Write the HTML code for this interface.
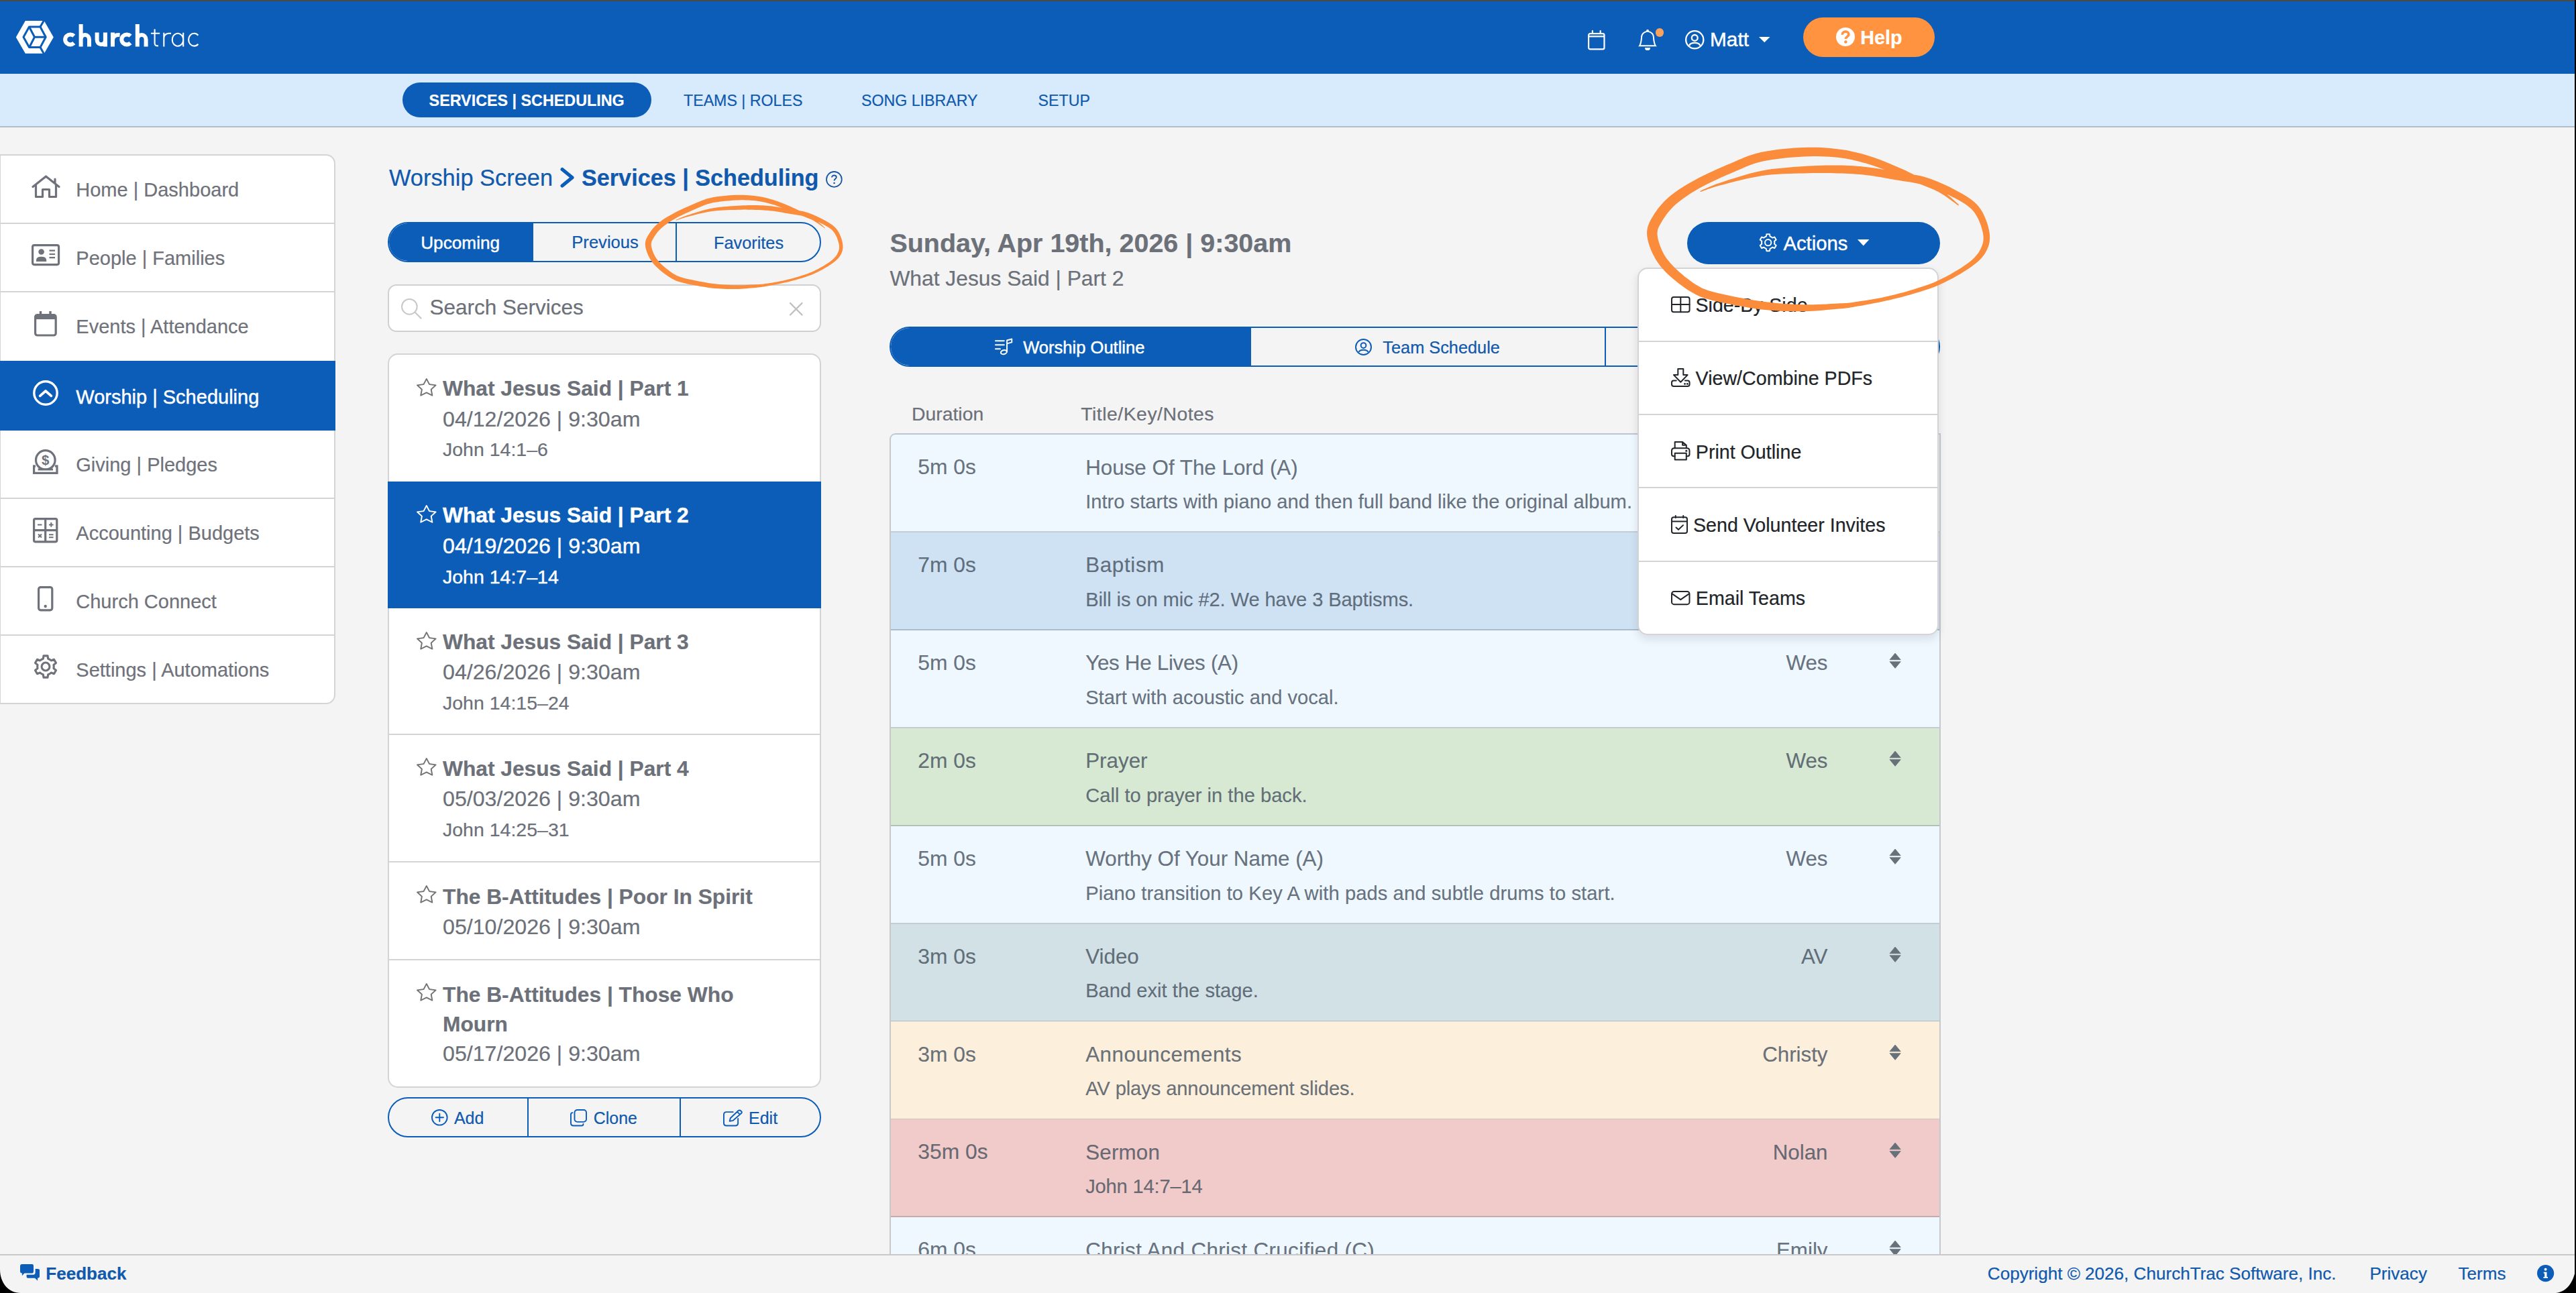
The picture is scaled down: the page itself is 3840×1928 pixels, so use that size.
<!DOCTYPE html>
<html>
<head>
<meta charset="utf-8">
<title>ChurchTrac - Services | Scheduling</title>
<style>
*{box-sizing:border-box;margin:0;padding:0}
html,body{width:3840px;height:1928px;overflow:hidden;background:#f4f4f4;font-family:"Liberation Sans",sans-serif}
body{position:relative;color:#6c7079}
.abs{position:absolute}
.t{position:absolute;white-space:nowrap;line-height:1;-webkit-text-stroke:.22px}
svg{position:absolute;overflow:visible}
</style>
</head>
<body>
<!-- HEADER -->
<div class="abs" style="left:0.0px;top:0.0px;width:3840.0px;height:110.0px;background:#0b5db7"></div>
<div class="abs" style="left:0.0px;top:0.0px;width:3840.0px;height:2.0px;background:#4b4947"></div>
<div class="abs" style="left:0.0px;top:110.0px;width:3840.0px;height:80.0px;background:#d8ebfd;border-bottom:2px solid #b1bdc9"></div>
<svg style="left:0.0px;top:0.0px;" width="110.0" height="110.0" viewBox="0 0 110 110"><polygon points="23.8,55.4 37.8,31 65.8,31 79.8,55.4 65.8,79.8 37.8,79.8" fill="#fff"/><polygon points="35,55.3 43.5,40 60,40 68.2,55.3 60,70.6 43.5,70.6" fill="#fff" stroke="#0b5db7" stroke-width="3" stroke-linejoin="round"/><path d="M44 41L51.5 55.3H68 M51.5 55.3L44 70" fill="none" stroke="#0b5db7" stroke-width="3"/><path d="M60 40L65.5 30.5M60 70.6L65.5 80.3" fill="none" stroke="#0b5db7" stroke-width="3"/></svg>
<svg style="left:0.0px;top:0.0px;" width="320.0" height="110.0" viewBox="0 0 320 110"><path d="M110.3 53.7A7.7 7.45 0 1 0 110.3 64.2M120.6 69.4V36.1M120.6 59A6.2 6.9 0 0 1 133 59V69.4M144.6 48.5V59.4A6.15 6.8 0 0 0 156.9 59.4M156.9 48.5V69.4M168 69.4V48.5M168 60C168 54.4 172 51.6 178.6 52.2M194.5 53.7A7.7 7.45 0 1 0 194.5 64.2M204.8 69.4V36.1M204.8 59A6.4 6.9 0 0 1 217.6 59V69.4" fill="none" stroke="#fff" stroke-width="6.0"/><path d="M230.6 43.4V64.6Q230.6 68.7 236 68.3M225 49.8H238.2M244.3 69.4V48.8M244.3 56.5C244.3 51.6 249 49 255 49.9M273.2 48.8V69.4M273.2 59.2A8.2 9.4 0 1 0 273.2 59.3M295.4 52.7A8.3 9.4 0 1 0 295.4 65.7" fill="none" stroke="#fff" stroke-width="2.1"/></svg>
<svg style="left:2366.6px;top:44.5px;" width="25.6" height="29.5" viewBox="0 0 25.6 29.5"><rect x="1.1" y="5.1" width="23.400000000000002" height="23.3" rx="2.4" fill="none" stroke="#fff" stroke-width="2.2"/><line x1="1.1" y1="9.3" x2="24.5" y2="9.3" stroke="#fff" stroke-width="2.2"/><line x1="6.912000000000001" y1="1" x2="6.912000000000001" y2="5" stroke="#fff" stroke-width="2.2" stroke-linecap="round"/><line x1="18.688" y1="1" x2="18.688" y2="5" stroke="#fff" stroke-width="2.2" stroke-linecap="round"/></svg>
<svg style="left:2442.0px;top:43.5px;" width="28.0" height="31.0" viewBox="1 0 14 16" preserveAspectRatio="none"><path d="M8 16a2 2 0 0 0 2-2H6a2 2 0 0 0 2 2zM8 1.918l-.797.161A4.002 4.002 0 0 0 4 6c0 .628-.134 2.197-.459 3.742-.16.767-.376 1.566-.663 2.258h10.244c-.287-.692-.502-1.49-.663-2.258C12.134 8.197 12 6.628 12 6a4.002 4.002 0 0 0-3.203-3.92L8 1.917zM14.22 12c.223.447.481.801.78 1H1c.299-.199.557-.553.78-1C2.68 10.2 3 6.88 3 6c0-2.42 1.72-4.44 4.005-4.901a1 1 0 1 1 1.99 0A5.002 5.002 0 0 1 13 6c0 .88.32 4.2 1.22 6z" fill="#fff" /></svg>
<div class="abs" style="left:2468px;top:42.2px;width:12.4px;height:12.4px;border-radius:50%;background:#f7a35e"></div>
<svg style="left:2512.0px;top:45.0px;" width="28.5" height="28.5" viewBox="0 0 28.5 28.5"><circle cx="14.25" cy="14.25" r="13.1" fill="none" stroke="#fff" stroke-width="2.3"/><circle cx="14.25" cy="11.4" r="4.4174999999999995" fill="none" stroke="#fff" stroke-width="2.3"/><path d="M6.2700000000000005 22.8C7.98 17.669999999999998 20.52 17.669999999999998 22.23 22.8" fill="none" stroke="#fff" stroke-width="2.3"/></svg>
<span class="t" style="left:2549.0px;top:44.4px;font-size:29.8px;font-weight:normal;color:#fff;-webkit-text-stroke:.45px #fff;">Matt</span>
<svg style="left:2622.0px;top:54.7px;" width="16.5" height="8.2" viewBox="0 0 10 5" preserveAspectRatio="none"><path d="M0 0H10L5 5Z" fill="#fff"/></svg>
<div class="abs" style="left:2688.0px;top:25.6px;width:196.0px;height:59.0px;background:#ff9340;border-radius:30px"></div>
<svg style="left:2736.5px;top:41.0px;" width="28.0" height="28.0" viewBox="0 0 16 16"><circle cx="8" cy="8" r="8" fill="#fff"/><path d="M5.3 6.1C5.3 4.5 6.5 3.5 8.1 3.5 9.7 3.5 10.8 4.5 10.8 5.8 10.8 7.6 8.2 7.9 8.2 9.7" fill="none" stroke="#ff9340" stroke-width="2.1"/><circle cx="8.2" cy="12.3" r="1.3" fill="#ff9340"/></svg>
<span class="t" style="left:2773.3px;top:41.5px;font-size:28.7px;font-weight:bold;color:#fff;">Help</span>
<div class="abs" style="left:600.0px;top:123.0px;width:370.6px;height:52.0px;background:#0b5db7;border-radius:26px"></div>
<span class="t" style="left:639.6px;top:139.1px;font-size:23.32px;font-weight:bold;color:#fff;">SERVICES | SCHEDULING</span>
<span class="t" style="left:1019.0px;top:139.2px;font-size:23.2px;font-weight:normal;color:#1059ad;">TEAMS | ROLES</span>
<span class="t" style="left:1284.0px;top:139.2px;font-size:23.2px;font-weight:normal;color:#1059ad;">SONG LIBRARY</span>
<span class="t" style="left:1547.6px;top:139.2px;font-size:23.2px;font-weight:normal;color:#1059ad;">SETUP</span>
<span class="t" style="left:580.0px;top:247.9px;font-size:34.4px;font-weight:normal;color:#1059ad;">Worship Screen</span>
<svg style="left:835.0px;top:249.6px;" width="20.6" height="29.6" viewBox="0 0 20.6 29.6"><path d="M3.1 2.6L18.0 14.8L3.1 27.0" fill="none" stroke="#0b5db7" stroke-width="5.2" stroke-linecap="round" stroke-linejoin="round" stroke-linecap="butt" stroke-linejoin="miter"/></svg>
<span class="t" style="left:867.0px;top:248.0px;font-size:34.2px;font-weight:bold;color:#1059ad;">Services | Scheduling</span>
<svg style="left:1231.0px;top:254.7px;" width="24.8" height="24.8" viewBox="0 0 16 16"><circle cx="8" cy="8" r="7.35" fill="none" stroke="#1757a6" stroke-width="1.15"/><path d="M5.8 6.2C5.8 5 6.7 4.2 8 4.2 9.3 4.2 10.2 5 10.2 6 10.2 7.4 8.1 7.6 8.1 9.4" fill="none" stroke="#1757a6" stroke-width="1.2"/><circle cx="8.1" cy="11.6" r="0.85" fill="#1757a6"/></svg>
<!-- SIDEBAR -->
<div class="abs" style="left:-1.0px;top:230.0px;width:501.0px;height:820.0px;background:#fff;border:2px solid #d4d4d7;border-radius:0 14px 14px 0"></div>
<div class="abs" style="left:0.0px;top:537.5px;width:500.0px;height:104.0px;background:#0b5db7"></div>
<span class="t" style="left:113.3px;top:269.0px;font-size:29.0px;font-weight:normal;color:#6f727a;">Home | Dashboard</span>
<div class="abs" style="left:0.0px;top:332.0px;width:498.0px;height:2.0px;background:#d4d4d7"></div>
<span class="t" style="left:113.3px;top:371.0px;font-size:29.0px;font-weight:normal;color:#6f727a;">People | Families</span>
<div class="abs" style="left:0.0px;top:434.0px;width:498.0px;height:2.0px;background:#d4d4d7"></div>
<span class="t" style="left:113.3px;top:473.0px;font-size:29.0px;font-weight:normal;color:#6f727a;">Events | Attendance</span>
<span class="t" style="left:113.3px;top:577.8px;font-size:29.0px;font-weight:normal;color:#fff;-webkit-text-stroke:.45px #fff;">Worship | Scheduling</span>
<span class="t" style="left:113.3px;top:679.0px;font-size:29.0px;font-weight:normal;color:#6f727a;">Giving | Pledges</span>
<div class="abs" style="left:0.0px;top:742.0px;width:498.0px;height:2.0px;background:#d4d4d7"></div>
<span class="t" style="left:113.3px;top:781.0px;font-size:29.0px;font-weight:normal;color:#6f727a;">Accounting | Budgets</span>
<div class="abs" style="left:0.0px;top:843.5px;width:498.0px;height:2.0px;background:#d4d4d7"></div>
<span class="t" style="left:113.3px;top:882.5px;font-size:29.0px;font-weight:normal;color:#6f727a;">Church Connect</span>
<div class="abs" style="left:0.0px;top:945.5px;width:498.0px;height:2.0px;background:#d4d4d7"></div>
<span class="t" style="left:113.3px;top:984.5px;font-size:29.0px;font-weight:normal;color:#6f727a;">Settings | Automations</span>
<svg style="left:46.5px;top:261.0px;" width="43.0" height="35.0" viewBox="0 0 43 35"><path d="M2 17.5L21.5 2L41 17.5M6.5 14.5V32.5H16.5V21.5H26.5V32.5H36.5V14.5M35 6V12" fill="none" stroke="#6f727a" stroke-width="3.2" stroke-linecap="round" stroke-linejoin="round" stroke-linecap="butt" stroke-linejoin="miter"/></svg>
<svg style="left:47.0px;top:364.3px;" width="42.2" height="32.2" viewBox="0 0 42.2 32.2"><rect x="1.6" y="1.6" width="39" height="29" rx="2.5" fill="none" stroke="#6f727a" stroke-width="3.2"/><circle cx="14.6" cy="11.5" r="4.3" fill="#6f727a"/><path d="M7 26V24Q7 18.8 14.6 18.8Q22.2 18.8 22.2 24V26Z" fill="#6f727a"/><path d="M26.5 9.6H35M26.5 15H35M26.5 20.2H35" stroke="#6f727a" stroke-width="2.2" fill="none"/></svg>
<svg style="left:51.3px;top:463.8px;" width="33.8" height="37.6" viewBox="0 0 33.8 37.6"><rect x="1.6" y="5.6" width="30.6" height="30.4" rx="3" fill="none" stroke="#6f727a" stroke-width="3.2"/><rect x="1.6" y="5.6" width="30.6" height="6.5" fill="#6f727a"/><path d="M9.5 0V7M24 0V7" stroke="#6f727a" stroke-width="3.4" fill="none"/></svg>
<svg style="left:49.3px;top:567.4px;" width="38.0" height="38.0" viewBox="0 0 38 38"><circle cx="19" cy="19" r="17.2" fill="none" stroke="#fff" stroke-width="3.4"/><path d="M10.6 23.4L19 16L27.4 23.4" fill="none" stroke="#fff" stroke-width="3.7" stroke-linecap="round" stroke-linejoin="round" stroke-linecap="butt" stroke-linejoin="miter"/></svg>
<svg style="left:49.4px;top:669.6px;" width="37.6" height="37.2" viewBox="0 0 37.6 37.2"><defs><clipPath id="gclip"><rect x="0" y="0" width="40" height="30.2"/></clipPath></defs><rect x="1.6" y="25" width="34.4" height="10.4" fill="#fff" stroke="#6f727a" stroke-width="3.2"/><rect x="4" y="20" width="29" height="9" fill="#fff"/><circle cx="18.8" cy="15.9" r="14.3" fill="#fff" stroke="#6f727a" stroke-width="3.2" clip-path="url(#gclip)"/><path d="M7.6 30H30" fill="none" stroke="#6f727a" stroke-width="3"/><text x="18.8" y="23.2" font-family="Liberation Sans" font-weight="bold" font-size="20.5" text-anchor="middle" fill="#6f727a">$</text></svg>
<svg style="left:49.4px;top:771.8px;" width="37.4" height="37.4" viewBox="0 0 37.4 37.4"><rect x="1.6" y="1.6" width="34.2" height="34.2" rx="2" fill="none" stroke="#6f727a" stroke-width="3.2"/><path d="M18.7 2V35.5M2 18.7H35.5" stroke="#6f727a" stroke-width="3.2" fill="none"/><path d="M7 10.4H13.5M24 10.4H30.6M27.3 7.1V13.7M8 24.5L13 29.5M13 24.5L8 29.5M24 25.3H30.6M24 29.3H30.6" stroke="#6f727a" stroke-width="2" fill="none"/></svg>
<svg style="left:56.4px;top:873.8px;" width="23.4" height="37.4" viewBox="0 0 23.4 37.4"><rect x="1.6" y="1.6" width="20.2" height="34.2" rx="3" fill="none" stroke="#6f727a" stroke-width="3.2"/><circle cx="11.7" cy="30" r="2.2" fill="#6f727a"/></svg>
<svg style="left:50.0px;top:976.4px;" width="36.0" height="36.0" viewBox="0 0 36 36"><path d="M14.31 6.31L15.00 1.83L21.00 1.83L21.69 6.31A12.26 12.26 0 0 1 26.28 8.96L26.28 8.96L30.51 7.32L33.51 12.51L29.97 15.35A12.26 12.26 0 0 1 29.97 20.65L29.97 20.65L33.51 23.49L30.51 28.68L26.28 27.04A12.26 12.26 0 0 1 21.69 29.69L21.69 29.69L21.00 34.17L15.00 34.17L14.31 29.69A12.26 12.26 0 0 1 9.72 27.04L9.72 27.04L5.49 28.68L2.49 23.49L6.03 20.65A12.26 12.26 0 0 1 6.03 15.35L6.03 15.35L2.49 12.51L5.49 7.32L9.72 8.96A12.26 12.26 0 0 1 14.31 6.31Z" fill="none" stroke="#6f727a" stroke-width="3.1" stroke-linejoin="round"/><circle cx="18.0" cy="18.0" r="5.94" fill="none" stroke="#6f727a" stroke-width="3.1"/></svg>
<!-- SERVICE LIST -->
<div class="abs" style="left:578.0px;top:331.0px;width:645.5px;height:60.0px;border:2px solid #0b5db7;border-radius:30px;overflow:hidden"><div class="abs" style="left:-2px;top:-2px;width:216.5px;height:60px;background:#0b5db7"></div><div class="abs" style="left:426.5px;top:-2px;width:2px;height:60px;background:#0b5db7"></div></div>
<span class="t" style="left:627.2px;top:348.8px;font-size:26.2px;font-weight:normal;color:#fff;-webkit-text-stroke:.45px #fff;">Upcoming</span>
<span class="t" style="left:852.3px;top:349.3px;font-size:25.6px;font-weight:normal;color:#1059ad;">Previous</span>
<span class="t" style="left:1064.0px;top:349.6px;font-size:25.3px;font-weight:normal;color:#1059ad;">Favorites</span>
<div class="abs" style="left:578.0px;top:423.5px;width:645.5px;height:71.0px;background:#fff;border:2px solid #d0d0d2;border-radius:13px"></div>
<svg style="left:598.3px;top:445.2px;" width="31.5" height="31.5" viewBox="0 0 31.5 31.5"><circle cx="12.34" cy="12.34" r="11.34" fill="none" stroke="#c8c8ca" stroke-width="2"/><line x1="20.5048" y1="20.5048" x2="29.5" y2="29.5" stroke="#c8c8ca" stroke-width="2.3" stroke-linecap="round"/></svg>
<span class="t" style="left:640.5px;top:443.1px;font-size:31.5px;font-weight:normal;color:#6c7079;">Search Services</span>
<svg style="left:1176.5px;top:451.0px;" width="19.5" height="19.5" viewBox="0 0 19.5 19.5"><path d="M1 1L18.5 18.5M18.5 1L1 18.5" fill="none" stroke="#c0c0c3" stroke-width="2.4" stroke-linecap="round" stroke-linejoin="round" /></svg>
<div class="abs" style="left:578.0px;top:526.8px;width:645.5px;height:1094.8px;background:#fff;border:2px solid #d4d4d7;border-radius:15px"></div>
<div class="abs" style="left:578.0px;top:717.5px;width:645.5px;height:189.0px;background:#0b5db7"></div>
<svg style="left:620.6px;top:562.9px;" width="29.6" height="28.6" viewBox="0 0 16 16" preserveAspectRatio="none"><path d="M2.866 14.85c-.078.444.36.791.746.593l4.39-2.256 4.389 2.256c.386.198.824-.149.746-.592l-.83-4.73 3.522-3.356c.33-.314.16-.888-.282-.95l-4.898-.696L8.465.792a.513.513 0 0 0-.927 0L5.354 5.12l-4.898.696c-.441.062-.612.636-.283.95l3.523 3.356-.83 4.73zm4.905-2.767-3.686 1.894.694-3.957a.565.565 0 0 0-.163-.505L1.71 6.745l4.052-.576a.525.525 0 0 0 .393-.288L8 2.223l1.847 3.658a.525.525 0 0 0 .393.288l4.052.575-2.906 2.77a.565.565 0 0 0-.163.506l.694 3.957-3.686-1.894a.503.503 0 0 0-.461 0z" fill="#737373" /></svg>
<span class="t" style="left:660.0px;top:564.2px;font-size:31.72px;font-weight:bold;color:#6c7079;">What Jesus Said | Part 1</span>
<span class="t" style="left:660.0px;top:608.5px;font-size:32.17px;font-weight:normal;color:#6c7079;">04/12/2026 | 9:30am</span>
<span class="t" style="left:660.0px;top:656.4px;font-size:28.5px;font-weight:normal;color:#6c7079;">John 14:1–6</span>
<svg style="left:620.6px;top:752.1px;" width="29.6" height="28.6" viewBox="0 0 16 16" preserveAspectRatio="none"><path d="M2.866 14.85c-.078.444.36.791.746.593l4.39-2.256 4.389 2.256c.386.198.824-.149.746-.592l-.83-4.73 3.522-3.356c.33-.314.16-.888-.282-.95l-4.898-.696L8.465.792a.513.513 0 0 0-.927 0L5.354 5.12l-4.898.696c-.441.062-.612.636-.283.95l3.523 3.356-.83 4.73zm4.905-2.767-3.686 1.894.694-3.957a.565.565 0 0 0-.163-.505L1.71 6.745l4.052-.576a.525.525 0 0 0 .393-.288L8 2.223l1.847 3.658a.525.525 0 0 0 .393.288l4.052.575-2.906 2.77a.565.565 0 0 0-.163.506l.694 3.957-3.686-1.894a.503.503 0 0 0-.461 0z" fill="#fff" /></svg>
<span class="t" style="left:660.0px;top:753.4px;font-size:31.72px;font-weight:bold;color:#fff;-webkit-text-stroke:.45px #fff;">What Jesus Said | Part 2</span>
<span class="t" style="left:660.0px;top:797.7px;font-size:32.17px;font-weight:normal;color:#fff;-webkit-text-stroke:.45px #fff;">04/19/2026 | 9:30am</span>
<span class="t" style="left:660.0px;top:845.6px;font-size:28.5px;font-weight:normal;color:#fff;-webkit-text-stroke:.45px #fff;">John 14:7–14</span>
<svg style="left:620.6px;top:940.8px;" width="29.6" height="28.6" viewBox="0 0 16 16" preserveAspectRatio="none"><path d="M2.866 14.85c-.078.444.36.791.746.593l4.39-2.256 4.389 2.256c.386.198.824-.149.746-.592l-.83-4.73 3.522-3.356c.33-.314.16-.888-.282-.95l-4.898-.696L8.465.792a.513.513 0 0 0-.927 0L5.354 5.12l-4.898.696c-.441.062-.612.636-.283.95l3.523 3.356-.83 4.73zm4.905-2.767-3.686 1.894.694-3.957a.565.565 0 0 0-.163-.505L1.71 6.745l4.052-.576a.525.525 0 0 0 .393-.288L8 2.223l1.847 3.658a.525.525 0 0 0 .393.288l4.052.575-2.906 2.77a.565.565 0 0 0-.163.506l.694 3.957-3.686-1.894a.503.503 0 0 0-.461 0z" fill="#737373" /></svg>
<span class="t" style="left:660.0px;top:942.1px;font-size:31.72px;font-weight:bold;color:#6c7079;">What Jesus Said | Part 3</span>
<span class="t" style="left:660.0px;top:986.4px;font-size:32.17px;font-weight:normal;color:#6c7079;">04/26/2026 | 9:30am</span>
<span class="t" style="left:660.0px;top:1034.3px;font-size:28.5px;font-weight:normal;color:#6c7079;">John 14:15–24</span>
<div class="abs" style="left:580.0px;top:1093.6px;width:641.5px;height:2.0px;background:#d4d4d7"></div>
<svg style="left:620.6px;top:1129.2px;" width="29.6" height="28.6" viewBox="0 0 16 16" preserveAspectRatio="none"><path d="M2.866 14.85c-.078.444.36.791.746.593l4.39-2.256 4.389 2.256c.386.198.824-.149.746-.592l-.83-4.73 3.522-3.356c.33-.314.16-.888-.282-.95l-4.898-.696L8.465.792a.513.513 0 0 0-.927 0L5.354 5.12l-4.898.696c-.441.062-.612.636-.283.95l3.523 3.356-.83 4.73zm4.905-2.767-3.686 1.894.694-3.957a.565.565 0 0 0-.163-.505L1.71 6.745l4.052-.576a.525.525 0 0 0 .393-.288L8 2.223l1.847 3.658a.525.525 0 0 0 .393.288l4.052.575-2.906 2.77a.565.565 0 0 0-.163.506l.694 3.957-3.686-1.894a.503.503 0 0 0-.461 0z" fill="#737373" /></svg>
<span class="t" style="left:660.0px;top:1130.5px;font-size:31.72px;font-weight:bold;color:#6c7079;">What Jesus Said | Part 4</span>
<span class="t" style="left:660.0px;top:1174.8px;font-size:32.17px;font-weight:normal;color:#6c7079;">05/03/2026 | 9:30am</span>
<span class="t" style="left:660.0px;top:1222.7px;font-size:28.5px;font-weight:normal;color:#6c7079;">John 14:25–31</span>
<div class="abs" style="left:580.0px;top:1283.6px;width:641.5px;height:2.0px;background:#d4d4d7"></div>
<svg style="left:620.6px;top:1319.2px;" width="29.6" height="28.6" viewBox="0 0 16 16" preserveAspectRatio="none"><path d="M2.866 14.85c-.078.444.36.791.746.593l4.39-2.256 4.389 2.256c.386.198.824-.149.746-.592l-.83-4.73 3.522-3.356c.33-.314.16-.888-.282-.95l-4.898-.696L8.465.792a.513.513 0 0 0-.927 0L5.354 5.12l-4.898.696c-.441.062-.612.636-.283.95l3.523 3.356-.83 4.73zm4.905-2.767-3.686 1.894.694-3.957a.565.565 0 0 0-.163-.505L1.71 6.745l4.052-.576a.525.525 0 0 0 .393-.288L8 2.223l1.847 3.658a.525.525 0 0 0 .393.288l4.052.575-2.906 2.77a.565.565 0 0 0-.163.506l.694 3.957-3.686-1.894a.503.503 0 0 0-.461 0z" fill="#737373" /></svg>
<span class="t" style="left:660.0px;top:1321.5px;font-size:31.72px;font-weight:bold;color:#6c7079;">The B-Attitudes | Poor In Spirit</span>
<span class="t" style="left:660.0px;top:1365.8px;font-size:32.17px;font-weight:normal;color:#6c7079;">05/10/2026 | 9:30am</span>
<div class="abs" style="left:580.0px;top:1429.8px;width:641.5px;height:2.0px;background:#d4d4d7"></div>
<svg style="left:620.6px;top:1465.4px;" width="29.6" height="28.6" viewBox="0 0 16 16" preserveAspectRatio="none"><path d="M2.866 14.85c-.078.444.36.791.746.593l4.39-2.256 4.389 2.256c.386.198.824-.149.746-.592l-.83-4.73 3.522-3.356c.33-.314.16-.888-.282-.95l-4.898-.696L8.465.792a.513.513 0 0 0-.927 0L5.354 5.12l-4.898.696c-.441.062-.612.636-.283.95l3.523 3.356-.83 4.73zm4.905-2.767-3.686 1.894.694-3.957a.565.565 0 0 0-.163-.505L1.71 6.745l4.052-.576a.525.525 0 0 0 .393-.288L8 2.223l1.847 3.658a.525.525 0 0 0 .393.288l4.052.575-2.906 2.77a.565.565 0 0 0-.163.506l.694 3.957-3.686-1.894a.503.503 0 0 0-.461 0z" fill="#737373" /></svg>
<span class="t" style="left:660.0px;top:1466.7px;font-size:31.72px;font-weight:bold;color:#6c7079;line-height:44.2px;margin-top:-6.2px;">The B-Attitudes | Those Who<br>Mourn</span>
<span class="t" style="left:660.0px;top:1554.8px;font-size:32.17px;font-weight:normal;color:#6c7079;">05/17/2026 | 9:30am</span>
<div class="abs" style="left:578.0px;top:1636.0px;width:645.5px;height:60.0px;border:2px solid #0b5db7;border-radius:30px;overflow:hidden"><div class="abs" style="left:205.5px;top:-2px;width:2px;height:60px;background:#0b5db7"></div><div class="abs" style="left:432.6px;top:-2px;width:2px;height:60px;background:#0b5db7"></div></div>
<svg style="left:642.8px;top:1654.2px;" width="24.6" height="24.6" viewBox="0 0 24.6 24.6"><circle cx="12.3" cy="12.3" r="11.350000000000001" fill="none" stroke="#0b5db7" stroke-width="1.9"/><path d="M12.3 6.642000000000001V17.958000000000002M6.642000000000001 12.3H17.958000000000002" fill="none" stroke="#0b5db7" stroke-width="1.9" stroke-linecap="round" stroke-linejoin="round" /></svg>
<span class="t" style="left:676.9px;top:1655.1px;font-size:25px;font-weight:normal;color:#1059ad;">Add</span>
<svg style="left:850.4px;top:1653.5px;" width="25.0" height="25.5" viewBox="0 0 25 25.5"><rect x="6.5" y="0.95" width="17.55" height="17.92" rx="4" fill="none" stroke="#0b5db7" stroke-width="1.9"/><path d="M3.5000000000000004 5.1000000000000005Q0.95 5.1000000000000005 0.95 8.16V20.55Q0.95 24.55 4.95 24.55H17.0Q19.5 24.55 19.5 21.93" fill="none" stroke="#0b5db7" stroke-width="1.9" stroke-linecap="round" stroke-linejoin="round" /></svg>
<span class="t" style="left:884.8px;top:1655.2px;font-size:24.9px;font-weight:normal;color:#1059ad;">Clone</span>
<svg style="left:1077.6px;top:1653.5px;" width="28.4" height="25.5" viewBox="0 0 28.4 25.5"><path d="M14.767999999999999 4.08H5Q0.95 4.08 0.95 8.08V20.55Q0.95 24.55 5 24.55H18.152Q22.152 24.55 22.152 20.55V14.025" fill="none" stroke="#0b5db7" stroke-width="1.9" stroke-linecap="round" stroke-linejoin="round" /><path d="M9.656 17.849999999999998L10.792 13.26L22.72 2.04Q24.424 0.765 26.128 2.295L27.264 3.315Q28.4 4.845 26.979999999999997 6.12L14.767999999999999 16.830000000000002Z M21.016 3.8249999999999997L24.991999999999997 7.6499999999999995" fill="none" stroke="#0b5db7" stroke-width="1.9" stroke-linecap="round" stroke-linejoin="round" /></svg>
<span class="t" style="left:1116.0px;top:1655.1px;font-size:25px;font-weight:normal;color:#1059ad;">Edit</span>
<!-- MAIN -->
<span class="t" style="left:1326.4px;top:343.4px;font-size:39.47px;font-weight:bold;color:#6c7079;">Sunday, Apr 19th, 2026 | 9:30am</span>
<span class="t" style="left:1326.4px;top:400.1px;font-size:31.77px;font-weight:normal;color:#6c7079;">What Jesus Said | Part 2</span>
<div class="abs" style="left:2515.0px;top:331.0px;width:377.2px;height:63.0px;background:#0b5db7;border-radius:32px"></div>
<svg style="left:2622.0px;top:348.0px;" width="27.4" height="27.4" viewBox="0 0 27.4 27.4"><path d="M10.81 4.54L11.39 1.21L16.01 1.21L16.59 4.54A9.6065 9.6065 0 0 1 20.19 6.62L20.19 6.62L23.36 5.45L25.67 9.46L23.08 11.62A9.6065 9.6065 0 0 1 23.08 15.78L23.08 15.78L25.67 17.94L23.36 21.95L20.19 20.78A9.6065 9.6065 0 0 1 16.59 22.86L16.59 22.86L16.01 26.19L11.39 26.19L10.81 22.86A9.6065 9.6065 0 0 1 7.21 20.78L7.21 20.78L4.04 21.95L1.73 17.94L4.32 15.78A9.6065 9.6065 0 0 1 4.32 11.62L4.32 11.62L1.73 9.46L4.04 5.45L7.21 6.62A9.6065 9.6065 0 0 1 10.81 4.54Z" fill="none" stroke="#fff" stroke-width="2.0" stroke-linejoin="round"/><circle cx="13.7" cy="13.7" r="4.658" fill="none" stroke="#fff" stroke-width="2.0"/></svg>
<span class="t" style="left:2658.4px;top:348.9px;font-size:29.27px;font-weight:normal;color:#fff;-webkit-text-stroke:.45px #fff;">Actions</span>
<svg style="left:2769.0px;top:357.0px;" width="17.5" height="9.5" viewBox="0 0 10 5" preserveAspectRatio="none"><path d="M0 0H10L5 5Z" fill="#fff"/></svg>
<div class="abs" style="left:1326.4px;top:487.4px;width:1565.6px;height:60.0px;border:2px solid #0b5db7;border-radius:30px;overflow:hidden"><div class="abs" style="left:-2px;top:-2px;width:538.2px;height:60px;background:#0b5db7"></div><div class="abs" style="left:1063.6px;top:-2px;width:2.4px;height:60px;background:#0b5db7"></div></div>
<svg style="left:1483.4px;top:505.2px;" width="26.6" height="24.5" viewBox="0 0 26.6 24.5"><path d="M1 3.185H13.832M1 9.31H13.832M1 15.19H7.98" fill="none" stroke="#fff" stroke-width="2" stroke-linecap="round" stroke-linejoin="round" /><path d="M18.088 19.6V2.45L25.27 0.49V5.39L18.088 7.35" fill="none" stroke="#fff" stroke-width="2" stroke-linecap="round" stroke-linejoin="round" /><ellipse cx="13.3" cy="20.09" rx="4.522" ry="2.94" fill="none" stroke="#fff" stroke-width="2" transform="rotate(-15 13.3 20.09)"/></svg>
<span class="t" style="left:1525.2px;top:505.6px;font-size:25.56px;font-weight:normal;color:#fff;-webkit-text-stroke:.45px #fff;">Worship Outline</span>
<svg style="left:2020.0px;top:504.6px;" width="25.0" height="25.0" viewBox="0 0 25 25"><circle cx="12.5" cy="12.5" r="11.5" fill="none" stroke="#0b5db7" stroke-width="2"/><circle cx="12.5" cy="10.0" r="3.875" fill="none" stroke="#0b5db7" stroke-width="2"/><path d="M5.5 20.0C7.000000000000001 15.5 18.0 15.5 19.5 20.0" fill="none" stroke="#0b5db7" stroke-width="2"/></svg>
<span class="t" style="left:2061.3px;top:505.7px;font-size:25.34px;font-weight:normal;color:#1059ad;">Team Schedule</span>
<span class="t" style="left:1359.0px;top:602.9px;font-size:28.36px;font-weight:normal;color:#6c7079;">Duration</span>
<span class="t" style="left:1611.3px;top:602.9px;font-size:28.36px;font-weight:normal;color:#6c7079;letter-spacing:.5px">Title/Key/Notes</span>
<div class="abs" style="left:1326.0px;top:646.0px;width:1567.0px;height:1300.0px;border:2px solid #c6c8cc;border-top-color:#bcc6d0;border-radius:9px 0 0 0;overflow:hidden;background:#f0f8ff"><div class="abs" style="left:0;top:0.0px;width:1565px;height:146.2px;background:#f0f8ff;border-bottom:2px solid rgba(70,80,95,.26)"></div><div class="abs" style="left:0;top:145.9px;width:1565px;height:146.2px;background:#cfe2f3;border-bottom:2px solid rgba(70,80,95,.26)"></div><div class="abs" style="left:0;top:291.8px;width:1565px;height:146.2px;background:#f0f8ff;border-bottom:2px solid rgba(70,80,95,.26)"></div><div class="abs" style="left:0;top:437.7px;width:1565px;height:146.2px;background:#d8e9d3;border-bottom:2px solid rgba(70,80,95,.26)"></div><div class="abs" style="left:0;top:583.6px;width:1565px;height:146.2px;background:#f0f8ff;border-bottom:2px solid rgba(70,80,95,.26)"></div><div class="abs" style="left:0;top:729.5px;width:1565px;height:146.2px;background:#d2e1e5;border-bottom:2px solid rgba(70,80,95,.26)"></div><div class="abs" style="left:0;top:875.4px;width:1565px;height:146.2px;background:#fcefdc;border-bottom:2px solid rgba(70,80,95,.26)"></div><div class="abs" style="left:0;top:1021.3px;width:1565px;height:146.2px;background:#f1cbc9;border-bottom:2px solid rgba(70,80,95,.26)"></div><div class="abs" style="left:0;top:1167.2px;width:1565px;height:146.2px;background:#f0f8ff;border-bottom:2px solid rgba(70,80,95,.26)"></div></div>
<span class="t" style="left:1368.3px;top:681.1px;font-size:31.8px;font-weight:normal;color:rgba(66,78,92,.78);">5m 0s</span>
<span class="t" style="left:1618.2px;top:681.5px;font-size:31.35px;font-weight:normal;color:rgba(66,78,92,.78);letter-spacing:0px">House Of The Lord (A)</span>
<span class="t" style="left:1618.2px;top:733.9px;font-size:29.15px;font-weight:normal;color:rgba(66,78,92,.78);letter-spacing:0px">Intro starts with piano and then full band like the original album.</span>
<span class="t" style="left:1368.3px;top:827.0px;font-size:31.8px;font-weight:normal;color:rgba(66,78,92,.78);">7m 0s</span>
<span class="t" style="left:1618.2px;top:827.4px;font-size:31.35px;font-weight:normal;color:rgba(66,78,92,.78);letter-spacing:0.67px">Baptism</span>
<span class="t" style="left:1618.2px;top:879.8px;font-size:29.15px;font-weight:normal;color:rgba(66,78,92,.78);letter-spacing:-0.12px">Bill is on mic #2. We have 3 Baptisms.</span>
<span class="t" style="left:1368.3px;top:972.9px;font-size:31.8px;font-weight:normal;color:rgba(66,78,92,.78);">5m 0s</span>
<span class="t" style="left:1618.2px;top:973.3px;font-size:31.35px;font-weight:normal;color:rgba(66,78,92,.78);letter-spacing:-0.29px">Yes He Lives (A)</span>
<span class="t" style="left:1618.2px;top:1025.7px;font-size:29.15px;font-weight:normal;color:rgba(66,78,92,.78);letter-spacing:0px">Start with acoustic and vocal.</span>
<span class="t" style="right:1115.5px;top:973.3px;font-size:31.3px;font-weight:normal;color:rgba(66,78,92,.78);">Wes</span>
<svg style="left:2817.3px;top:974.2px;" width="16.2" height="22.4" viewBox="0 0 16.2 22.4"><path d="M8.1 0L16.2 9.744H0Z M0 12.655999999999999H16.2L8.1 22.4Z" fill="#687079" stroke="#687079" stroke-width=".8" stroke-linejoin="round"/></svg>
<span class="t" style="left:1368.3px;top:1118.8px;font-size:31.8px;font-weight:normal;color:rgba(66,78,92,.78);">2m 0s</span>
<span class="t" style="left:1618.2px;top:1119.2px;font-size:31.35px;font-weight:normal;color:rgba(66,78,92,.78);letter-spacing:0px">Prayer</span>
<span class="t" style="left:1618.2px;top:1171.6px;font-size:29.15px;font-weight:normal;color:rgba(66,78,92,.78);letter-spacing:0px">Call to prayer in the back.</span>
<span class="t" style="right:1115.5px;top:1119.2px;font-size:31.3px;font-weight:normal;color:rgba(66,78,92,.78);">Wes</span>
<svg style="left:2817.3px;top:1120.1px;" width="16.2" height="22.4" viewBox="0 0 16.2 22.4"><path d="M8.1 0L16.2 9.744H0Z M0 12.655999999999999H16.2L8.1 22.4Z" fill="#687079" stroke="#687079" stroke-width=".8" stroke-linejoin="round"/></svg>
<span class="t" style="left:1368.3px;top:1264.7px;font-size:31.8px;font-weight:normal;color:rgba(66,78,92,.78);">5m 0s</span>
<span class="t" style="left:1618.2px;top:1265.1px;font-size:31.35px;font-weight:normal;color:rgba(66,78,92,.78);letter-spacing:0px">Worthy Of Your Name (A)</span>
<span class="t" style="left:1618.2px;top:1317.5px;font-size:29.15px;font-weight:normal;color:rgba(66,78,92,.78);letter-spacing:0.09px">Piano transition to Key A with pads and subtle drums to start.</span>
<span class="t" style="right:1115.5px;top:1265.1px;font-size:31.3px;font-weight:normal;color:rgba(66,78,92,.78);">Wes</span>
<svg style="left:2817.3px;top:1266.0px;" width="16.2" height="22.4" viewBox="0 0 16.2 22.4"><path d="M8.1 0L16.2 9.744H0Z M0 12.655999999999999H16.2L8.1 22.4Z" fill="#687079" stroke="#687079" stroke-width=".8" stroke-linejoin="round"/></svg>
<span class="t" style="left:1368.3px;top:1410.6px;font-size:31.8px;font-weight:normal;color:rgba(66,78,92,.78);">3m 0s</span>
<span class="t" style="left:1618.2px;top:1411.0px;font-size:31.35px;font-weight:normal;color:rgba(66,78,92,.78);letter-spacing:0px">Video</span>
<span class="t" style="left:1618.2px;top:1463.4px;font-size:29.15px;font-weight:normal;color:rgba(66,78,92,.78);letter-spacing:0px">Band exit the stage.</span>
<span class="t" style="right:1115.5px;top:1411.0px;font-size:31.3px;font-weight:normal;color:rgba(66,78,92,.78);">AV</span>
<svg style="left:2817.3px;top:1411.9px;" width="16.2" height="22.4" viewBox="0 0 16.2 22.4"><path d="M8.1 0L16.2 9.744H0Z M0 12.655999999999999H16.2L8.1 22.4Z" fill="#687079" stroke="#687079" stroke-width=".8" stroke-linejoin="round"/></svg>
<span class="t" style="left:1368.3px;top:1556.5px;font-size:31.8px;font-weight:normal;color:rgba(66,78,92,.78);">3m 0s</span>
<span class="t" style="left:1618.2px;top:1556.9px;font-size:31.35px;font-weight:normal;color:rgba(66,78,92,.78);letter-spacing:0.5px">Announcements</span>
<span class="t" style="left:1618.2px;top:1609.3px;font-size:29.15px;font-weight:normal;color:rgba(66,78,92,.78);letter-spacing:-0.11px">AV plays announcement slides.</span>
<span class="t" style="right:1115.5px;top:1556.9px;font-size:31.3px;font-weight:normal;color:rgba(66,78,92,.78);">Christy</span>
<svg style="left:2817.3px;top:1557.8px;" width="16.2" height="22.4" viewBox="0 0 16.2 22.4"><path d="M8.1 0L16.2 9.744H0Z M0 12.655999999999999H16.2L8.1 22.4Z" fill="#687079" stroke="#687079" stroke-width=".8" stroke-linejoin="round"/></svg>
<span class="t" style="left:1368.3px;top:1702.4px;font-size:31.8px;font-weight:normal;color:rgba(66,78,92,.78);">35m 0s</span>
<span class="t" style="left:1618.2px;top:1702.8px;font-size:31.35px;font-weight:normal;color:rgba(66,78,92,.78);letter-spacing:0.2px">Sermon</span>
<span class="t" style="left:1618.2px;top:1755.2px;font-size:29.15px;font-weight:normal;color:rgba(66,78,92,.78);letter-spacing:-0.19px">John 14:7–14</span>
<span class="t" style="right:1115.5px;top:1702.8px;font-size:31.3px;font-weight:normal;color:rgba(66,78,92,.78);">Nolan</span>
<svg style="left:2817.3px;top:1703.7px;" width="16.2" height="22.4" viewBox="0 0 16.2 22.4"><path d="M8.1 0L16.2 9.744H0Z M0 12.655999999999999H16.2L8.1 22.4Z" fill="#687079" stroke="#687079" stroke-width=".8" stroke-linejoin="round"/></svg>
<span class="t" style="left:1368.3px;top:1848.3px;font-size:31.8px;font-weight:normal;color:rgba(66,78,92,.78);">6m 0s</span>
<span class="t" style="left:1618.2px;top:1848.7px;font-size:31.35px;font-weight:normal;color:rgba(66,78,92,.78);letter-spacing:0.36px">Christ And Christ Crucified (C)</span>
<span class="t" style="right:1115.5px;top:1848.7px;font-size:31.3px;font-weight:normal;color:rgba(66,78,92,.78);">Emily</span>
<svg style="left:2817.3px;top:1849.6px;" width="16.2" height="22.4" viewBox="0 0 16.2 22.4"><path d="M8.1 0L16.2 9.744H0Z M0 12.655999999999999H16.2L8.1 22.4Z" fill="#687079" stroke="#687079" stroke-width=".8" stroke-linejoin="round"/></svg>
<!-- FOOTER -->
<div class="abs" style="left:0.0px;top:1870.0px;width:3840.0px;height:58.0px;background:#f4f4f4;border-top:2px solid #c9c9cb"></div>
<svg style="left:30.0px;top:1885.4px;" width="29.0" height="24.8" viewBox="0 0 29 24.8"><path d="M2 0H17.98Q20.009999999999998 0 20.009999999999998 3V10.416Q20.009999999999998 13.392000000000001 17.98 13.392000000000001H6.38L2.9000000000000004 17.36V13.392000000000001H3Q0 13.392000000000001 0 10.416V3Q0 0 3 0Z" fill="#0b5db7"/><path d="M22.62 6.944000000000001H26Q29 6.944000000000001 29 8.927999999999999V18.352Q29 20.832 26 20.832H26.1V24.8L22.04 20.832H11.600000000000001Q9.57 20.832 9.57 18.848000000000003V15.872000000000002H18.56Q22.62 15.872000000000002 22.62 12.4Z" fill="#0b5db7"/></svg>
<span class="t" style="left:68.3px;top:1885.7px;font-size:26.06px;font-weight:bold;color:#1059ad;">Feedback</span>
<span class="t" style="left:2962.8px;top:1886.3px;font-size:26.09px;font-weight:normal;color:#1059ad;">Copyright © 2026, ChurchTrac Software, Inc.</span>
<span class="t" style="left:3532.4px;top:1886.3px;font-size:26.1px;font-weight:normal;color:#1059ad;">Privacy</span>
<span class="t" style="left:3664.5px;top:1886.3px;font-size:26.1px;font-weight:normal;color:#1059ad;">Terms</span>
<svg style="left:3782.4px;top:1885.6px;" width="25.2" height="25.2" viewBox="0 0 16 16"><circle cx="8" cy="8" r="8" fill="#0b5db7"/><circle cx="8" cy="4.3" r="1.25" fill="#fff"/><path d="M6.2 6.9H9.2V11.4H10.2V12.6H6V11.4H7.1V8.1H6.2Z" fill="#fff"/></svg>
<!-- DROPDOWN -->
<div class="abs" style="left:2440.5px;top:398.5px;width:449.0px;height:548.5px;background:#fff;border:2px solid #d4d4d7;border-radius:15px;box-shadow:0 6px 14px rgba(0,0,0,.11);overflow:hidden"><div class="abs" style="left:0;top:107.3px;width:448px;height:2px;background:#d4d4d7"></div><div class="abs" style="left:0;top:216.6px;width:448px;height:2px;background:#d4d4d7"></div><div class="abs" style="left:0;top:325.9px;width:448px;height:2px;background:#d4d4d7"></div><div class="abs" style="left:0;top:435.2px;width:448px;height:2px;background:#d4d4d7"></div></div>
<svg style="left:2491.0px;top:442.0px;" width="28.6" height="24.2" viewBox="0 0 28.6 24.2"><rect x="1.0" y="1.0" width="26.6" height="22.2" rx="3" fill="none" stroke="#212529" stroke-width="2"/><path d="M14.3 1V23.2M1 12.1H27.6" fill="none" stroke="#212529" stroke-width="2" stroke-linecap="round" stroke-linejoin="round" /></svg>
<span class="t" style="left:2527.5px;top:440.5px;font-size:28.63px;font-weight:normal;color:#212529;">Side-By-Side</span>
<svg style="left:2491.0px;top:549.0px;" width="28.6" height="28.0" viewBox="0 0 28.6 28"><path d="M10.296 1.0H18.304000000000002V10.08H24.596L14.3 20.72L4.0040000000000004 10.08H10.296Z" fill="none" stroke="#212529" stroke-width="2" stroke-linecap="round" stroke-linejoin="round" /><path d="M7.722000000000001 18.48H4Q1.0 18.48 1.0 21.48V24.0Q1.0 27.0 4 27.0H24.6Q27.6 27.0 27.6 24.0V21.48Q27.6 18.48 24.6 18.48H20.878" fill="none" stroke="#212529" stroke-width="2" stroke-linecap="round" stroke-linejoin="round" /><circle cx="20.592" cy="23.52" r="1.4" fill="#212529"/><circle cx="24.310000000000002" cy="23.52" r="1.4" fill="#212529"/></svg>
<span class="t" style="left:2527.6px;top:550.2px;font-size:28.63px;font-weight:normal;color:#212529;">View/Combine PDFs</span>
<svg style="left:2491.3px;top:657.9px;" width="28.5" height="28.5" viewBox="0 0 28.5 28.5"><path d="M5.7 10.26V1.0H17.099999999999998L22.8 5.7V10.26M17.099999999999998 1.0V5.7H22.8" fill="none" stroke="#212529" stroke-width="2" stroke-linecap="round" stroke-linejoin="round" /><path d="M5.7 22.23H4Q1.0 22.23 1.0 19.23V14.26Q1.0 10.26 5 10.26H23.5Q27.5 10.26 27.5 14.26V19.23Q27.5 22.23 24.5 22.23H22.8" fill="none" stroke="#212529" stroke-width="2" stroke-linecap="round" stroke-linejoin="round" /><path d="M5.7 17.669999999999998H22.8V27.5H5.7Z" fill="none" stroke="#212529" stroke-width="2" stroke-linecap="round" stroke-linejoin="round" /><circle cx="22.8" cy="14.25" r="1.5" fill="#212529"/></svg>
<span class="t" style="left:2527.8px;top:659.5px;font-size:28.63px;font-weight:normal;color:#212529;">Print Outline</span>
<svg style="left:2491.3px;top:768.0px;" width="25.0" height="28.0" viewBox="0 0 25 28"><rect x="1.0" y="3.36" width="23" height="23.64" rx="3" fill="none" stroke="#212529" stroke-width="2"/><path d="M1 9.520000000000001H24M6.75 1V3.9200000000000004M18.25 1V3.9200000000000004" fill="none" stroke="#212529" stroke-width="2" stroke-linecap="round" stroke-linejoin="round" /><path d="M7.5 18.48L11.0 21.84L18.0 15.120000000000001" fill="none" stroke="#212529" stroke-width="2" stroke-linecap="round" stroke-linejoin="round" /></svg>
<span class="t" style="left:2524.0px;top:768.8px;font-size:28.63px;font-weight:normal;color:#212529;">Send Volunteer Invites</span>
<svg style="left:2491.3px;top:880.5px;" width="28.5" height="21.2" viewBox="0 0 28.5 21.2"><rect x="1.0" y="1.0" width="26.5" height="19.2" rx="3.5" fill="none" stroke="#212529" stroke-width="2"/><path d="M2 4.664L14.25 13.144L26.5 4.664" fill="none" stroke="#212529" stroke-width="2" stroke-linecap="round" stroke-linejoin="round" /></svg>
<span class="t" style="left:2527.8px;top:878.1px;font-size:28.63px;font-weight:normal;color:#212529;">Email Teams</span>
<!-- ANNOTATIONS -->
<svg style="left:0.0px;top:0.0px;pointer-events:none" width="3840.0" height="1928.0" viewBox="0 0 3840 1928"><path d="M2534.6 286.1L2536.8 285.4L2539.3 284.5L2542.4 283.4L2545.9 282.1L2549.8 280.8L2554.3 279.3L2559.2 277.8L2564.7 276.3L2571.0 274.7L2578.1 272.8L2585.8 270.8L2594.0 268.8L2602.3 266.8L2610.8 265.0L2619.0 263.4L2626.9 262.1L2634.7 261.1L2642.5 260.3L2650.4 259.8L2658.3 259.3L2666.2 259.0L2673.9 258.8L2681.4 258.6L2688.7 258.4L2695.6 258.2L2702.4 258.0L2709.0 257.9L2715.5 257.9L2721.7 258.0L2727.9 258.1L2733.9 258.2L2739.9 258.4L2745.6 258.5L2751.2 258.7L2756.5 259.0L2761.8 259.3L2767.0 259.7L2772.1 260.1L2777.3 260.6L2782.6 261.2L2787.9 261.8L2793.2 262.6L2798.6 263.4L2803.9 264.3L2809.3 265.3L2814.7 266.3L2820.1 267.2L2825.6 268.2L2831.1 269.1L2836.5 269.9L2841.9 270.7L2847.3 271.6L2852.6 272.5L2857.8 273.5L2863.0 274.7L2868.2 276.1L2873.5 277.8L2878.9 279.7L2884.4 281.8L2890.0 284.0L2895.4 286.3L2900.7 288.7L2905.8 291.2L2910.6 293.7L2915.3 296.1L2919.8 298.6L2924.2 301.1L2928.3 303.6L2932.1 306.2L2935.6 308.9L2938.8 311.7L2941.6 314.8L2944.2 318.3L2946.6 322.2L2948.9 326.5L2950.9 331.0L2952.6 335.6L2954.0 340.0L2955.2 344.2L2956.0 348.0L2956.5 351.4L2956.7 354.5L2956.6 357.4L2956.3 360.2L2955.7 362.9L2954.9 365.6L2953.8 368.3L2952.5 371.1L2951.1 373.8L2949.5 376.5L2947.6 379.1L2945.5 381.6L2943.1 384.2L2940.3 386.9L2937.0 389.7L2933.4 392.6L2929.1 395.6L2924.2 398.9L2918.9 402.2L2913.2 405.6L2907.4 409.0L2901.5 412.2L2895.8 415.1L2890.2 417.8L2884.9 420.2L2879.6 422.4L2874.2 424.5L2868.9 426.3L2863.5 428.1L2858.1 429.8L2852.7 431.5L2847.3 433.1L2842.0 434.7L2836.6 436.2L2831.2 437.6L2825.9 439.0L2820.5 440.3L2815.1 441.5L2809.8 442.7L2804.4 443.9L2798.8 444.9L2793.1 446.0L2787.2 447.0L2781.4 447.9L2775.7 448.8L2770.4 449.6L2765.5 450.3L2761.1 450.9L2757.6 451.4L2754.9 451.7L2752.8 451.9L2751.0 452.0L2749.1 452.1L2746.8 452.2L2743.7 452.3L2739.7 452.5L2734.8 452.7L2729.1 453.0L2723.0 453.4L2716.4 453.7L2709.6 454.0L2702.6 454.2L2695.5 454.3L2688.4 454.2L2681.3 454.0L2674.0 453.7L2666.5 453.3L2658.9 452.9L2651.2 452.3L2643.3 451.6L2635.2 450.6L2627.1 449.6L2618.4 448.3L2609.0 446.8L2599.3 445.0L2589.5 443.2L2579.9 441.3L2570.9 439.3L2562.8 437.5L2555.8 435.7L2550.2 434.2L2545.7 432.9L2542.1 431.6L2539.1 430.4L2536.4 429.2L2533.8 427.7L2530.8 426.0L2527.3 423.9L2523.5 421.4L2519.5 418.6L2515.5 415.6L2511.4 412.4L2507.4 409.1L2503.5 405.8L2500.0 402.6L2496.8 399.5L2493.8 396.5L2491.1 393.6L2488.7 390.8L2486.4 388.0L2484.3 385.2L2482.4 382.4L2480.6 379.4L2478.9 376.3L2477.3 373.0L2475.8 369.4L2474.3 365.6L2473.1 361.9L2472.0 358.2L2471.2 354.7L2470.7 351.5L2470.5 348.7L2470.6 346.3L2470.9 344.1L2471.3 342.1L2472.0 340.1L2473.0 337.9L2474.2 335.5L2475.7 332.9L2477.4 330.0L2479.3 327.0L2481.3 323.9L2483.5 320.8L2485.9 317.6L2488.5 314.4L2491.4 311.2L2494.4 308.1L2497.7 305.0L2501.3 302.0L2505.1 298.9L2509.2 295.9L2513.5 292.9L2518.1 289.8L2522.9 286.8L2528.0 283.7L2533.4 280.6L2539.1 277.5L2545.4 274.3L2552.1 271.1L2559.0 267.8L2565.9 264.6L2572.7 261.6L2579.4 258.7L2585.6 256.0L2591.4 253.5L2596.7 251.2L2601.7 249.0L2606.5 247.0L2611.4 245.2L2616.4 243.5L2621.8 241.9L2627.8 240.5L2634.5 239.2L2641.8 238.0L2649.5 236.9L2657.6 235.9L2665.7 235.1L2673.7 234.5L2681.4 233.9L2688.7 233.5L2695.6 233.2L2702.2 233.1L2708.8 233.1L2715.1 233.2L2721.3 233.4L2727.4 233.8L2733.4 234.2L2739.3 234.8L2744.9 235.5L2750.4 236.3L2755.7 237.3L2760.8 238.3L2766.0 239.5L2771.1 240.8L2776.3 242.2L2781.6 243.6L2787.0 245.3L2792.5 247.0L2798.1 249.0L2803.6 251.0L2809.1 253.1L2814.5 255.2L2819.7 257.2L2824.5 259.1L2829.0 260.8L2833.2 262.4L2837.1 264.0L2840.8 265.5L2844.5 267.1L2848.3 268.7L2852.1 270.3L2856.1 272.1L2860.4 273.8L2864.7 275.5L2869.1 277.2L2873.5 278.9L2877.9 280.7L2882.2 282.5L2886.3 284.5L2890.3 286.5L2894.3 288.9L2898.5 291.6L2902.7 294.5L2906.8 297.4L2910.6 300.3L2914.1 302.8L2917.0 304.9L2919.3 306.5L2920.1 305.5L2918.1 303.6L2915.5 301.2L2912.3 298.2L2908.7 295.0L2904.9 291.7L2900.9 288.3L2896.8 285.1L2892.9 282.3L2889.0 279.7L2884.9 277.2L2880.7 274.8L2876.5 272.6L2872.2 270.3L2868.0 268.2L2863.9 266.0L2859.9 263.9L2856.0 262.0L2852.3 260.1L2848.6 258.2L2845.0 256.4L2841.2 254.6L2837.3 252.8L2833.1 250.9L2828.7 248.9L2823.8 246.9L2818.7 244.7L2813.3 242.5L2807.8 240.3L2802.1 238.1L2796.3 235.9L2790.6 234.0L2785.0 232.2L2779.6 230.6L2774.2 229.1L2768.9 227.7L2763.5 226.4L2758.0 225.2L2752.5 224.1L2746.7 223.2L2740.7 222.4L2734.6 221.7L2728.4 221.0L2722.1 220.5L2715.6 220.1L2709.0 219.8L2702.2 219.7L2695.2 219.7L2688.1 219.9L2680.6 220.3L2672.7 220.8L2664.4 221.5L2656.1 222.3L2647.8 223.3L2639.7 224.4L2632.0 225.7L2624.8 227.1L2618.3 228.7L2612.3 230.4L2606.8 232.3L2601.5 234.3L2596.4 236.4L2591.2 238.6L2585.9 240.9L2580.2 243.4L2573.9 246.1L2567.2 249.0L2560.2 252.0L2553.2 255.3L2546.1 258.5L2539.3 261.8L2532.7 265.1L2526.6 268.4L2521.0 271.5L2515.6 274.6L2510.4 277.7L2505.5 280.8L2500.7 284.0L2496.2 287.2L2491.9 290.4L2487.9 293.8L2484.0 297.2L2480.4 300.8L2477.1 304.4L2474.0 308.0L2471.2 311.6L2468.6 315.2L2466.3 318.6L2464.2 322.0L2462.3 325.1L2460.6 328.1L2459.0 331.2L2457.6 334.4L2456.4 337.8L2455.6 341.4L2455.1 345.2L2455.1 349.3L2455.5 353.5L2456.3 357.8L2457.4 362.2L2458.8 366.6L2460.4 370.9L2462.2 375.2L2464.1 379.2L2466.1 383.1L2468.1 386.7L2470.4 390.2L2472.7 393.6L2475.2 396.9L2477.9 400.1L2480.8 403.2L2483.8 406.4L2487.0 409.5L2490.6 412.8L2494.6 416.2L2498.7 419.6L2503.0 423.0L2507.5 426.3L2511.9 429.5L2516.3 432.4L2520.5 434.9L2524.2 437.1L2527.5 439.0L2530.7 440.6L2534.1 442.2L2537.8 443.6L2541.9 444.9L2546.8 446.3L2552.8 447.9L2560.0 449.6L2568.3 451.4L2577.5 453.3L2587.2 455.2L2597.1 457.0L2607.0 458.7L2616.6 460.2L2625.5 461.4L2634.0 462.3L2642.3 463.0L2650.4 463.5L2658.3 463.9L2666.1 464.1L2673.7 464.2L2681.1 464.2L2688.4 464.2L2695.6 464.0L2702.9 463.7L2710.1 463.2L2717.0 462.7L2723.6 462.1L2729.8 461.5L2735.4 461.0L2740.3 460.5L2744.2 460.2L2747.2 459.9L2749.6 459.7L2751.6 459.5L2753.6 459.2L2755.8 458.9L2758.6 458.4L2762.1 457.9L2766.5 457.1L2771.5 456.3L2776.8 455.4L2782.5 454.3L2788.3 453.3L2794.2 452.1L2800.0 450.9L2805.6 449.7L2811.1 448.6L2816.5 447.4L2821.9 446.1L2827.3 444.8L2832.7 443.4L2838.2 442.0L2843.6 440.5L2849.1 438.9L2854.5 437.3L2859.9 435.7L2865.4 434.0L2870.8 432.3L2876.3 430.4L2881.9 428.4L2887.4 426.2L2893.0 423.8L2898.7 421.1L2904.6 418.1L2910.7 414.9L2916.7 411.6L2922.5 408.2L2928.0 404.8L2933.1 401.5L2937.6 398.4L2941.6 395.5L2945.2 392.7L2948.5 389.9L2951.4 387.2L2954.1 384.4L2956.4 381.5L2958.6 378.4L2960.5 375.3L2962.1 372.1L2963.5 368.8L2964.7 365.4L2965.5 361.9L2966.0 358.2L2966.2 354.4L2966.1 350.5L2965.6 346.4L2964.7 342.0L2963.6 337.3L2962.1 332.3L2960.2 327.3L2958.1 322.2L2955.7 317.3L2952.9 312.5L2949.8 308.2L2946.3 304.3L2942.5 300.8L2938.4 297.5L2934.1 294.6L2929.7 291.8L2925.2 289.1L2920.5 286.5L2915.8 283.9L2910.8 281.3L2905.6 278.6L2900.1 276.0L2894.5 273.4L2888.8 271.0L2883.0 268.7L2877.3 266.6L2871.6 264.7L2866.0 263.1L2860.3 261.8L2854.7 260.7L2849.2 259.7L2843.7 258.9L2838.3 258.1L2833.0 257.3L2827.6 256.4L2822.2 255.4L2816.8 254.4L2811.4 253.5L2806.0 252.5L2800.5 251.6L2795.0 250.7L2789.5 249.9L2784.0 249.2L2778.6 248.7L2773.2 248.1L2767.9 247.7L2762.6 247.3L2757.2 247.0L2751.7 246.8L2746.0 246.6L2740.1 246.4L2734.1 246.4L2728.0 246.4L2721.7 246.5L2715.3 246.7L2708.8 246.9L2702.1 247.2L2695.2 247.5L2688.1 248.0L2680.9 248.5L2673.4 249.1L2665.6 249.7L2657.7 250.4L2649.7 251.2L2641.6 252.1L2633.6 253.3L2625.7 254.7L2617.6 256.5L2609.3 258.6L2600.8 260.9L2592.5 263.4L2584.4 265.9L2576.8 268.3L2569.8 270.7L2563.7 272.7L2558.2 274.6L2553.3 276.4L2548.9 278.2L2545.0 279.9L2541.6 281.4L2538.6 282.8L2536.2 284.0L2534.2 284.9Z" fill="#fa8c3c"/><path d="M2534.6 286.1L2536.8 285.4L2539.3 284.5L2542.4 283.4L2545.9 282.1L2549.8 280.8L2554.3 279.3L2559.2 277.8L2564.7 276.3L2571.0 274.7L2578.1 272.8L2585.8 270.8L2594.0 268.8L2602.3 266.8L2610.8 265.0L2619.0 263.4L2626.9 262.1L2634.7 261.1L2642.5 260.3L2650.4 259.8L2658.3 259.3L2666.2 259.0L2673.9 258.8L2681.4 258.6L2688.7 258.4L2695.6 258.2L2702.4 258.0L2709.0 257.9L2715.5 257.9L2721.7 258.0L2727.9 258.1L2733.9 258.2L2739.9 258.4L2745.6 258.5L2751.2 258.7L2756.5 259.0L2761.8 259.3L2767.0 259.7L2772.1 260.1L2777.3 260.6L2782.6 261.2L2787.9 261.8L2793.2 262.6L2798.6 263.4L2803.9 264.3L2809.3 265.3L2814.7 266.3L2820.1 267.2L2825.6 268.2L2831.1 269.1L2836.5 269.9L2841.9 270.7L2847.3 271.6L2852.6 272.5L2857.8 273.5L2863.0 274.7L2868.2 276.1L2873.5 277.8L2878.9 279.7L2884.4 281.8L2890.0 284.0L2895.4 286.3L2900.7 288.7L2905.8 291.2L2910.6 293.7L2915.3 296.1L2919.8 298.6L2924.2 301.1L2928.3 303.6L2932.1 306.2L2935.6 308.9L2938.8 311.7L2941.6 314.8L2944.2 318.3L2946.6 322.2L2948.9 326.5L2950.9 331.0L2952.6 335.6L2954.0 340.0L2955.2 344.2L2956.0 348.0L2956.5 351.4L2956.7 354.5L2956.6 357.4L2956.3 360.2L2955.7 362.9L2954.9 365.6L2953.8 368.3L2952.5 371.1L2951.1 373.8L2949.5 376.5L2947.6 379.1L2945.5 381.6L2943.1 384.2L2940.3 386.9L2937.0 389.7L2933.4 392.6L2929.1 395.6L2924.2 398.9L2918.9 402.2L2913.2 405.6L2907.4 409.0L2901.5 412.2L2895.8 415.1L2890.2 417.8L2884.9 420.2L2879.6 422.4L2874.2 424.5L2868.9 426.3L2863.5 428.1L2858.1 429.8L2852.7 431.5L2847.3 433.1L2842.0 434.7L2836.6 436.2L2831.2 437.6L2825.9 439.0L2820.5 440.3L2815.1 441.5L2809.8 442.7L2804.4 443.9L2798.8 444.9L2793.1 446.0L2787.2 447.0L2781.4 447.9L2775.7 448.8L2770.4 449.6L2765.5 450.3L2761.1 450.9L2757.6 451.4L2754.9 451.7L2752.8 451.9L2751.0 452.0L2749.1 452.1L2746.8 452.2L2743.7 452.3L2739.7 452.5L2734.8 452.7L2729.1 453.0L2723.0 453.4L2716.4 453.7L2709.6 454.0L2702.6 454.2L2695.5 454.3L2688.4 454.2L2681.3 454.0L2674.0 453.7L2666.5 453.3L2658.9 452.9L2651.2 452.3L2643.3 451.6L2635.2 450.6L2627.1 449.6L2618.4 448.3L2609.0 446.8L2599.3 445.0L2589.5 443.2L2579.9 441.3L2570.9 439.3L2562.8 437.5L2555.8 435.7L2550.2 434.2L2545.7 432.9L2542.1 431.6L2539.1 430.4L2536.4 429.2L2533.8 427.7L2530.8 426.0L2527.3 423.9L2523.5 421.4L2519.5 418.6L2515.5 415.6L2511.4 412.4L2507.4 409.1L2503.5 405.8L2500.0 402.6L2496.8 399.5L2493.8 396.5L2491.1 393.6L2488.7 390.8L2486.4 388.0L2484.3 385.2L2482.4 382.4L2480.6 379.4L2478.9 376.3L2477.3 373.0L2475.8 369.4L2474.3 365.6L2473.1 361.9L2472.0 358.2L2471.2 354.7L2470.7 351.5L2470.5 348.7L2470.6 346.3L2470.9 344.1L2471.3 342.1L2472.0 340.1L2473.0 337.9L2474.2 335.5L2475.7 332.9L2477.4 330.0L2479.3 327.0L2481.3 323.9L2483.5 320.8L2485.9 317.6L2488.5 314.4L2491.4 311.2L2494.4 308.1L2497.7 305.0L2501.3 302.0L2505.1 298.9L2509.2 295.9L2513.5 292.9L2518.1 289.8L2522.9 286.8L2528.0 283.7L2533.4 280.6L2539.1 277.5L2545.4 274.3L2552.1 271.1L2559.0 267.8L2565.9 264.6L2572.7 261.6L2579.4 258.7L2585.6 256.0L2591.4 253.5L2596.7 251.2L2601.7 249.0L2606.5 247.0L2611.4 245.2L2616.4 243.5L2621.8 241.9L2627.8 240.5L2634.5 239.2L2641.8 238.0L2649.5 236.9L2657.6 235.9L2665.7 235.1L2673.7 234.5L2681.4 233.9L2688.7 233.5L2695.6 233.2L2702.2 233.1L2708.8 233.1L2715.1 233.2L2721.3 233.4L2727.4 233.8L2733.4 234.2L2739.3 234.8L2744.9 235.5L2750.4 236.3L2755.7 237.3L2760.8 238.3L2766.0 239.5L2771.1 240.8L2776.3 242.2L2781.6 243.6L2787.0 245.3L2792.5 247.0L2798.1 249.0L2803.6 251.0L2809.1 253.1L2814.5 255.2L2819.7 257.2L2824.5 259.1L2829.0 260.8L2833.2 262.4L2837.1 264.0L2840.8 265.5L2844.5 267.1L2848.3 268.7L2852.1 270.3L2856.1 272.1L2860.4 273.8L2864.7 275.5L2869.1 277.2L2873.5 278.9L2877.9 280.7L2882.2 282.5L2886.3 284.5L2890.3 286.5L2894.3 288.9L2898.5 291.6L2902.7 294.5L2906.8 297.4L2910.6 300.3L2914.1 302.8L2917.0 304.9L2919.3 306.5L2920.1 305.5L2918.1 303.6L2915.5 301.2L2912.3 298.2L2908.7 295.0L2904.9 291.7L2900.9 288.3L2896.8 285.1L2892.9 282.3L2889.0 279.7L2884.9 277.2L2880.7 274.8L2876.5 272.6L2872.2 270.3L2868.0 268.2L2863.9 266.0L2859.9 263.9L2856.0 262.0L2852.3 260.1L2848.6 258.2L2845.0 256.4L2841.2 254.6L2837.3 252.8L2833.1 250.9L2828.7 248.9L2823.8 246.9L2818.7 244.7L2813.3 242.5L2807.8 240.3L2802.1 238.1L2796.3 235.9L2790.6 234.0L2785.0 232.2L2779.6 230.6L2774.2 229.1L2768.9 227.7L2763.5 226.4L2758.0 225.2L2752.5 224.1L2746.7 223.2L2740.7 222.4L2734.6 221.7L2728.4 221.0L2722.1 220.5L2715.6 220.1L2709.0 219.8L2702.2 219.7L2695.2 219.7L2688.1 219.9L2680.6 220.3L2672.7 220.8L2664.4 221.5L2656.1 222.3L2647.8 223.3L2639.7 224.4L2632.0 225.7L2624.8 227.1L2618.3 228.7L2612.3 230.4L2606.8 232.3L2601.5 234.3L2596.4 236.4L2591.2 238.6L2585.9 240.9L2580.2 243.4L2573.9 246.1L2567.2 249.0L2560.2 252.0L2553.2 255.3L2546.1 258.5L2539.3 261.8L2532.7 265.1L2526.6 268.4L2521.0 271.5L2515.6 274.6L2510.4 277.7L2505.5 280.8L2500.7 284.0L2496.2 287.2L2491.9 290.4L2487.9 293.8L2484.0 297.2L2480.4 300.8L2477.1 304.4L2474.0 308.0L2471.2 311.6L2468.6 315.2L2466.3 318.6L2464.2 322.0L2462.3 325.1L2460.6 328.1L2459.0 331.2L2457.6 334.4L2456.4 337.8L2455.6 341.4L2455.1 345.2L2455.1 349.3L2455.5 353.5L2456.3 357.8L2457.4 362.2L2458.8 366.6L2460.4 370.9L2462.2 375.2L2464.1 379.2L2466.1 383.1L2468.1 386.7L2470.4 390.2L2472.7 393.6L2475.2 396.9L2477.9 400.1L2480.8 403.2L2483.8 406.4L2487.0 409.5L2490.6 412.8L2494.6 416.2L2498.7 419.6L2503.0 423.0L2507.5 426.3L2511.9 429.5L2516.3 432.4L2520.5 434.9L2524.2 437.1L2527.5 439.0L2530.7 440.6L2534.1 442.2L2537.8 443.6L2541.9 444.9L2546.8 446.3L2552.8 447.9L2560.0 449.6L2568.3 451.4L2577.5 453.3L2587.2 455.2L2597.1 457.0L2607.0 458.7L2616.6 460.2L2625.5 461.4L2634.0 462.3L2642.3 463.0L2650.4 463.5L2658.3 463.9L2666.1 464.1L2673.7 464.2L2681.1 464.2L2688.4 464.2L2695.6 464.0L2702.9 463.7L2710.1 463.2L2717.0 462.7L2723.6 462.1L2729.8 461.5L2735.4 461.0L2740.3 460.5L2744.2 460.2L2747.2 459.9L2749.6 459.7L2751.6 459.5L2753.6 459.2L2755.8 458.9L2758.6 458.4L2762.1 457.9L2766.5 457.1L2771.5 456.3L2776.8 455.4L2782.5 454.3L2788.3 453.3L2794.2 452.1L2800.0 450.9L2805.6 449.7L2811.1 448.6L2816.5 447.4L2821.9 446.1L2827.3 444.8L2832.7 443.4L2838.2 442.0L2843.6 440.5L2849.1 438.9L2854.5 437.3L2859.9 435.7L2865.4 434.0L2870.8 432.3L2876.3 430.4L2881.9 428.4L2887.4 426.2L2893.0 423.8L2898.7 421.1L2904.6 418.1L2910.7 414.9L2916.7 411.6L2922.5 408.2L2928.0 404.8L2933.1 401.5L2937.6 398.4L2941.6 395.5L2945.2 392.7L2948.5 389.9L2951.4 387.2L2954.1 384.4L2956.4 381.5L2958.6 378.4L2960.5 375.3L2962.1 372.1L2963.5 368.8L2964.7 365.4L2965.5 361.9L2966.0 358.2L2966.2 354.4L2966.1 350.5L2965.6 346.4L2964.7 342.0L2963.6 337.3L2962.1 332.3L2960.2 327.3L2958.1 322.2L2955.7 317.3L2952.9 312.5L2949.8 308.2L2946.3 304.3L2942.5 300.8L2938.4 297.5L2934.1 294.6L2929.7 291.8L2925.2 289.1L2920.5 286.5L2915.8 283.9L2910.8 281.3L2905.6 278.6L2900.1 276.0L2894.5 273.4L2888.8 271.0L2883.0 268.7L2877.3 266.6L2871.6 264.7L2866.0 263.1L2860.3 261.8L2854.7 260.7L2849.2 259.7L2843.7 258.9L2838.3 258.1L2833.0 257.3L2827.6 256.4L2822.2 255.4L2816.8 254.4L2811.4 253.5L2806.0 252.5L2800.5 251.6L2795.0 250.7L2789.5 249.9L2784.0 249.2L2778.6 248.7L2773.2 248.1L2767.9 247.7L2762.6 247.3L2757.2 247.0L2751.7 246.8L2746.0 246.6L2740.1 246.4L2734.1 246.4L2728.0 246.4L2721.7 246.5L2715.3 246.7L2708.8 246.9L2702.1 247.2L2695.2 247.5L2688.1 248.0L2680.9 248.5L2673.4 249.1L2665.6 249.7L2657.7 250.4L2649.7 251.2L2641.6 252.1L2633.6 253.3L2625.7 254.7L2617.6 256.5L2609.3 258.6L2600.8 260.9L2592.5 263.4L2584.4 265.9L2576.8 268.3L2569.8 270.7L2563.7 272.7L2558.2 274.6L2553.3 276.4L2548.9 278.2L2545.0 279.9L2541.6 281.4L2538.6 282.8L2536.2 284.0L2534.2 284.9Z" fill="#fa8c3c" transform="translate(1108.8,360.3) scale(0.5765,0.574) translate(-2710,-341)"/></svg>
<!-- WINDOW EDGES -->
<div class="abs" style="left:3838.0px;top:0.0px;width:2.0px;height:1928.0px;background:#000"></div>
<svg style="left:0.0px;top:1888.0px;" width="40.0" height="40.0" viewBox="0 0 40 40"><path d="M0 5C0 24 12 40 31 40H0Z" fill="#000"/></svg>
<svg style="left:3800.0px;top:1878.0px;" width="40.0" height="50.0" viewBox="0 0 40 50"><path d="M40 5C40 30 27 50 8 50H40Z" fill="#000"/></svg>
</body>
</html>
